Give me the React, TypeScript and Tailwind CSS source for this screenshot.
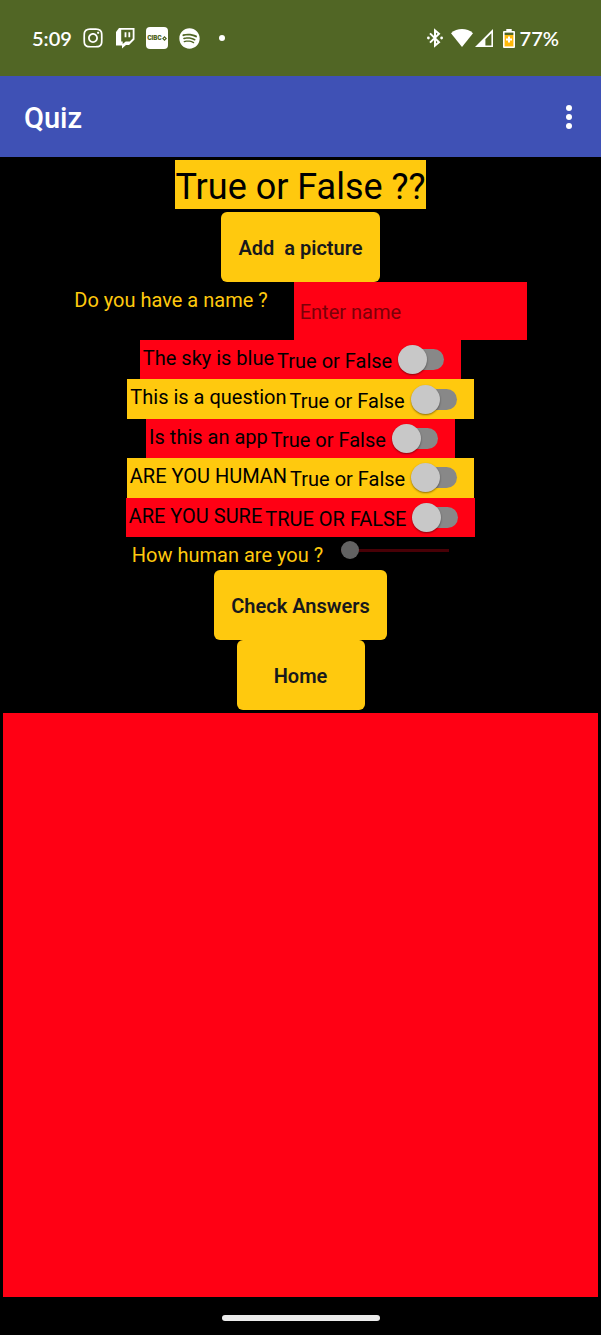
import React from "react";
import { FaInstagram, FaSpotify } from "react-icons/fa";

type Question = { id: string; text: string; answer: string; tone: string };

const questions: Question[] = [
  { id: "sky", text: "The sky is blue", answer: "True or False", tone: "bg-[#ff0014]" },
  { id: "question", text: "This is a question", answer: "True or False", tone: "bg-[#ffc90e]" },
  { id: "app", text: "Is this an app", answer: "True or False", tone: "bg-[#ff0014]" },
  { id: "human", text: "ARE YOU HUMAN", answer: "True or False", tone: "bg-[#ffc90e]" },
  { id: "sure", text: "ARE YOU SURE", answer: "TRUE OR FALSE", tone: "bg-[#ff0014]" },
];

function StatusBar() {
  return (
    <header className="flex h-[76px] shrink-0 items-center justify-between bg-[#516625] pl-8 pr-[42px] font-['Lato',sans-serif] text-xl font-semibold text-white">
      <div className="flex items-center">
        <span className="w-[42px]">5:09</span>
        <FaInstagram className="ml-2 size-[22px]" />
        <svg viewBox="0 0 20 21" className="ml-[11px] h-[21px] w-5" fill="none" aria-hidden="true">
          <path d="M4 0H19.500v11.500L14 17H11l-4 3.500V17.500H1V4z" fill="#fff" />
          <path d="M6.200 1.800h11.500v8.800l-3 3h-4l-3 2.500v-2.500H6.200z" fill="#516625" />
          <path d="M10.500 4.200v5M14.300 4.200v5" stroke="#fff" strokeWidth="1.800" />
        </svg>
        <span className="ml-[11px] flex size-[22px] items-center justify-center rounded bg-white font-['Inter',sans-serif] text-[6px] font-black text-[#516625]">
          CIBC
          <svg viewBox="0 0 6 6" className="size-[5px]" aria-hidden="true">
            <path fillRule="evenodd" d="M3 0l3 3-3 3-3-3zM3 2l-1 1 1 1 1-1z" fill="#516625" />
          </svg>
        </span>
        <FaSpotify className="ml-[11px] size-[21px]" />
        <span className="ml-[19px] size-1.5 rounded-full bg-white" />
      </div>
      <div className="flex items-center">
        <svg viewBox="0 0 16 20" className="h-5 w-4" fill="none" stroke="#fff" strokeWidth="2" aria-hidden="true">
          <path d="M3 5.400l9 8.800L8 17.600V2.400l4 3.400-9 8.800" />
          <circle cx="1.400" cy="10" r="1.400" fill="#fff" stroke="none" />
          <circle cx="14.600" cy="10" r="1.400" fill="#fff" stroke="none" />
        </svg>
        <svg viewBox="0 0 22 18" className="ml-2 h-[18px] w-[22px]" aria-hidden="true">
          <path d="M0 4.200C6-1.400 16-1.400 22 4.200L11 18z" fill="#fff" />
        </svg>
        <svg viewBox="0 0 18 18" className="ml-0.5 size-[18px]" aria-hidden="true">
          <path fillRule="evenodd" d="M18 0v18H0zM16.400 4.200L10.400 10.200v6.200h6z" fill="#fff" />
        </svg>
        <svg viewBox="0 0 12 19" className="ml-[10px] h-[19px] w-3" aria-hidden="true">
          <path d="M3.300 0h5.400v2H11a1 1 0 0 1 1 1v15a1 1 0 0 1-1 1H1a1 1 0 0 1-1-1V3a1 1 0 0 1 1-1h2.300z" fill="#fff" />
          <path d="M1.600 3.600h8.800V6H1.600z" fill="#516625" />
          <path d="M1.600 6h8.800v11.400H1.600z" fill="#ffb90a" />
          <path d="M6 7.500v6M3 10.500h6" stroke="#fff" strokeWidth="2" />
        </svg>
        <span className="ml-[5px]">77%</span>
      </div>
    </header>
  );
}

function AppBar() {
  return (
    <div className="flex h-[81px] shrink-0 items-center justify-between bg-[#3f51b5] px-6 text-white">
      <h1 className="pt-0.5 text-[29px] font-medium leading-9">Quiz</h1>
      <button type="button" aria-label="More options" className="flex w-4 flex-col items-center gap-[3px]">
        <span className="size-1.5 rounded-full bg-white" />
        <span className="size-1.5 rounded-full bg-white" />
        <span className="size-1.5 rounded-full bg-white" />
      </button>
    </div>
  );
}

function ActionButton({ children }: { children: React.ReactNode }) {
  return (
    <button
      type="button"
      className="h-[70px] min-w-32 whitespace-pre rounded-md bg-[#ffc90e] px-[17px] pt-0.5 text-xl font-semibold text-[#17181c]"
    >
      {children}
    </button>
  );
}

function QuestionRow({ id, text, answer, tone }: Question) {
  return (
    <label htmlFor={id} className={`flex items-center pl-[3px] pr-[17px] text-black ${tone}`}>
      <span className="self-start pt-1.5 leading-6">{text}</span>
      <span className="ml-[3px] pt-[3px] leading-6">{answer}</span>
      <input
        id={id}
        type="checkbox"
        role="switch"
        className="relative ml-1.5 flex h-[29px] w-[46px] appearance-none items-center before:ml-1 before:h-[21px] before:w-[42px] before:rounded-full before:bg-[#888] after:absolute after:left-0 after:size-[29px] after:rounded-full after:bg-[#c8c8c8] after:shadow-[0_1px_2px_rgba(0,0,0,0.45)] checked:after:left-[17px]"
      />
    </label>
  );
}

export default function App() {
  return (
    <div className="flex min-h-screen flex-col bg-black font-['Roboto',sans-serif]">
      <StatusBar />
      <AppBar />
      <main className="flex flex-1 flex-col items-center px-[3px] pt-[3px] text-xl">
        <h2 className="mb-[3px] h-[49px] bg-[#ffc90e] text-4xl leading-[54px] text-black">True or False ??</h2>
        <ActionButton>{"Add  a picture"}</ActionButton>
        <div className="flex h-[58px]">
          <label htmlFor="name" className="pt-1.5 leading-6 text-[#ffc90e]">
            Do you have a name ?
          </label>
          <input
            id="name"
            type="text"
            placeholder="Enter name"
            className="ml-[26px] w-[233px] bg-[#ff0014] px-1.5 pt-px text-black outline-none placeholder:text-[#7a0008]"
          />
        </div>
        <div className="grid h-[197px] grid-rows-5 justify-items-center">
          {questions.map((q) => (
            <QuestionRow key={q.id} {...q} />
          ))}
        </div>
        <div className="flex h-[33px]">
          <label htmlFor="level" className="pt-1.5 leading-6 text-[#ffc90e]">
            How human are you ?
          </label>
          <input
            id="level"
            type="range"
            min={0}
            max={100}
            defaultValue={0}
            className="ml-[18px] mr-5 mt-1 h-[18px] w-[108px] appearance-none bg-[linear-gradient(#480006,#480006)] bg-[length:100%_3px] bg-center bg-no-repeat [&::-webkit-slider-thumb]:size-[18px] [&::-webkit-slider-thumb]:appearance-none [&::-webkit-slider-thumb]:rounded-full [&::-webkit-slider-thumb]:bg-[#626262]"
          />
        </div>
        <ActionButton>Check Answers</ActionButton>
        <ActionButton>Home</ActionButton>
        <section aria-label="Canvas" className="mt-[3px] w-full flex-1 bg-[#ff0014]" />
      </main>
      <footer className="flex h-[38px] shrink-0 items-center justify-center pt-[3px]">
        <span className="h-1.5 w-[158px] rounded-full bg-[#ebebeb]" />
      </footer>
    </div>
  );
}
